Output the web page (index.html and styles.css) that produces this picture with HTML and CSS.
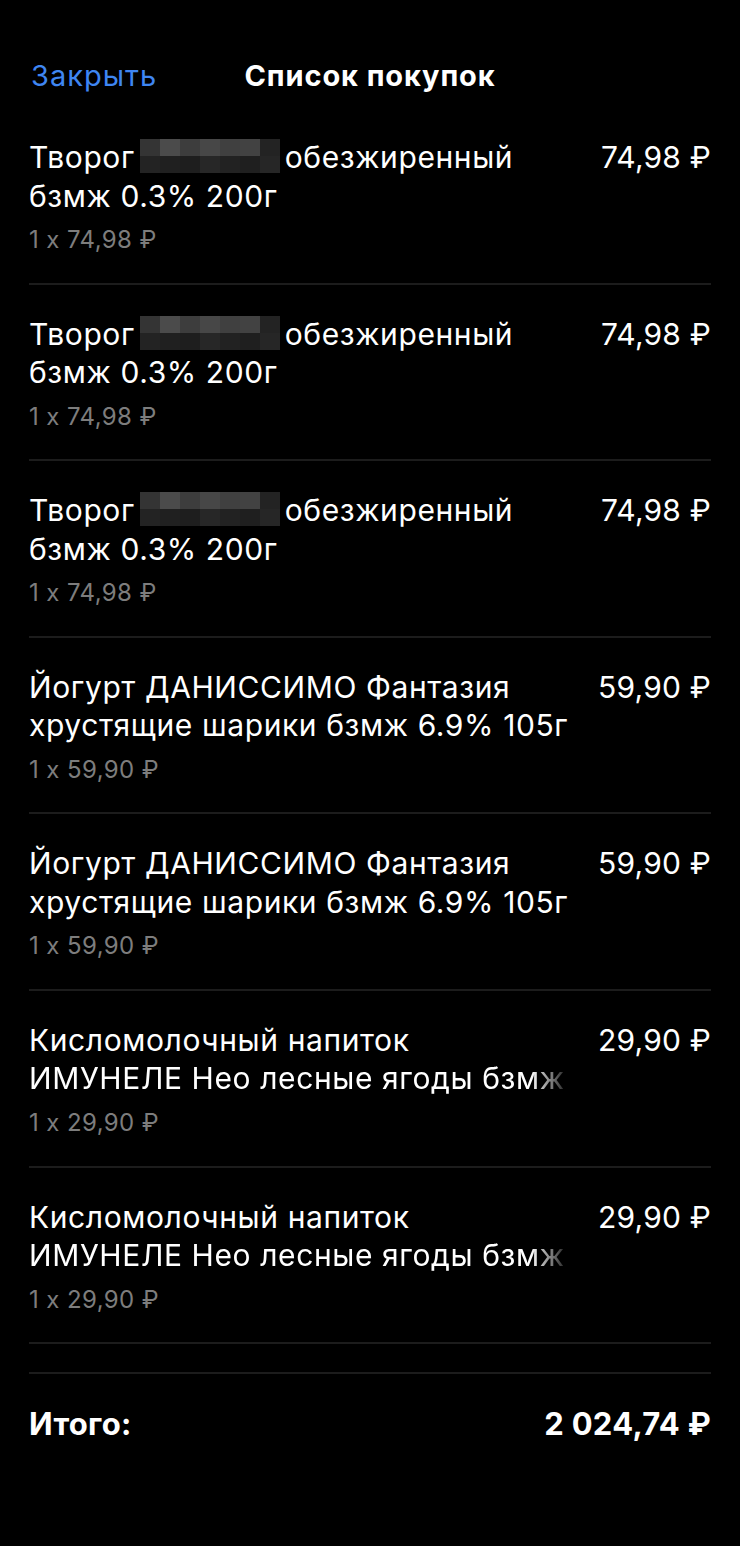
FILE: index.html
```html
<!DOCTYPE html>
<html lang="ru">
<head>
<meta charset="utf-8">
<title>Список покупок</title>
<link rel="stylesheet" href="styles.css">
</head>
<body>
<div class="screen">
  <header class="topbar">
    <span class="close">Закрыть</span>
    <span class="title">Список покупок</span>
  </header>

  <ul class="items">
    <li class="item">
      <div class="info">
        <div class="name">Творог <span class="mosaic"></span> обезжиренный<br>бзмж 0.3% 200г</div>
        <div class="qty">1 x 74,98 ₽</div>
      </div>
      <div class="price">74,98 ₽</div>
    </li>
    <li class="item">
      <div class="info">
        <div class="name">Творог <span class="mosaic"></span> обезжиренный<br>бзмж 0.3% 200г</div>
        <div class="qty">1 x 74,98 ₽</div>
      </div>
      <div class="price">74,98 ₽</div>
    </li>
    <li class="item">
      <div class="info">
        <div class="name">Творог <span class="mosaic"></span> обезжиренный<br>бзмж 0.3% 200г</div>
        <div class="qty">1 x 74,98 ₽</div>
      </div>
      <div class="price">74,98 ₽</div>
    </li>
    <li class="item">
      <div class="info">
        <div class="name">Йогурт ДАНИССИМО Фантазия<br>хрустящие шарики бзмж 6.9% 105г</div>
        <div class="qty">1 x 59,90 ₽</div>
      </div>
      <div class="price">59,90 ₽</div>
    </li>
    <li class="item">
      <div class="info">
        <div class="name">Йогурт ДАНИССИМО Фантазия<br>хрустящие шарики бзмж 6.9% 105г</div>
        <div class="qty">1 x 59,90 ₽</div>
      </div>
      <div class="price">59,90 ₽</div>
    </li>
    <li class="item">
      <div class="info">
        <div class="name">Кисломолочный напиток<br><span class="fade">ИМУНЕЛЕ Нео лесные ягоды бзмж</span></div>
        <div class="qty">1 x 29,90 ₽</div>
      </div>
      <div class="price">29,90 ₽</div>
    </li>
    <li class="item">
      <div class="info">
        <div class="name">Кисломолочный напиток<br><span class="fade">ИМУНЕЛЕ Нео лесные ягоды бзмж</span></div>
        <div class="qty">1 x 29,90 ₽</div>
      </div>
      <div class="price">29,90 ₽</div>
    </li>
  </ul>

  <div class="total">
    <span class="total-label">Итого:</span>
    <span class="total-sum">2 024,74 ₽</span>
  </div>
</div>
</body>
</html>
```

FILE: styles.css
```css
* { box-sizing: border-box; }

html, body {
  margin: 0;
  padding: 0;
  background: #000;
}

body {
  font-family: Inter, Roboto, "Liberation Sans", sans-serif;
  font-feature-settings: "calt" 0;
  color: #fff;
  -webkit-font-smoothing: antialiased;
}

.screen {
  width: 740px;
  min-height: 1546px;
  background: #000;
}

.topbar {
  position: relative;
  display: flex;
  justify-content: center;
  align-items: flex-start;
  height: 108px;
  padding-top: 56px;
}

.close {
  position: absolute;
  left: 31px;
  top: 56px;
  line-height: 40px;
  font-size: 29px;
  letter-spacing: 1px;
  color: #3f86f2;
}

.title {
  line-height: 40px;
  font-size: 29px;
  font-weight: 700;
  letter-spacing: 0.9px;
  color: #fff;
}

.items {
  list-style: none;
  margin: 0;
  padding: 0 29px;
}

.item {
  display: flex;
  justify-content: space-between;
  align-items: flex-start;
  height: 176.6px;
  padding-top: 30px;
  border-bottom: 2px solid #1c1c1c;
}

.info {
  display: flex;
  flex-direction: column;
  min-width: 0;
}

.name {
  font-size: 30px;
  line-height: 38.5px;
  letter-spacing: 0.6px;
  color: #fff;
  white-space: nowrap;
}

.mosaic {
  display: inline-block;
  width: 140px;
  height: 34px;
  vertical-align: -5px;
  margin: 0 -4px;
  background:
    linear-gradient(to right,
      #343434 0 20px, #4b4b4b 20px 40px, #3d3d3d 40px 60px,
      #474747 60px 80px, #404040 80px 100px, #424242 100px 120px,
      #232323 120px 140px) top / 100% 50% no-repeat,
    linear-gradient(to right,
      #232323 0 20px, #202020 20px 40px, #1e1e1e 40px 60px,
      #272727 60px 80px, #222222 80px 100px, #1f1f1f 100px 120px,
      #262626 120px 140px) bottom / 100% 50% no-repeat;
}

.fade {
  display: inline-block;
  -webkit-mask-image: linear-gradient(to right, #000 calc(100% - 34px), rgba(0,0,0,0.15));
  mask-image: linear-gradient(to right, #000 calc(100% - 34px), rgba(0,0,0,0.15));
}

.qty {
  margin-top: 9px;
  font-size: 24px;
  line-height: 32px;
  letter-spacing: 0.4px;
  color: #7d7d7d;
}

.price {
  font-size: 30px;
  line-height: 38.5px;
  letter-spacing: 0.2px;
  color: #fff;
  white-space: nowrap;
}

.total {
  display: flex;
  justify-content: space-between;
  align-items: center;
  margin: 28px 29px 0;
  padding-top: 30px;
  border-top: 2px solid #1c1c1c;
  font-size: 31px;
  line-height: 40px;
  font-weight: 700;
  letter-spacing: 0.3px;
}
```
